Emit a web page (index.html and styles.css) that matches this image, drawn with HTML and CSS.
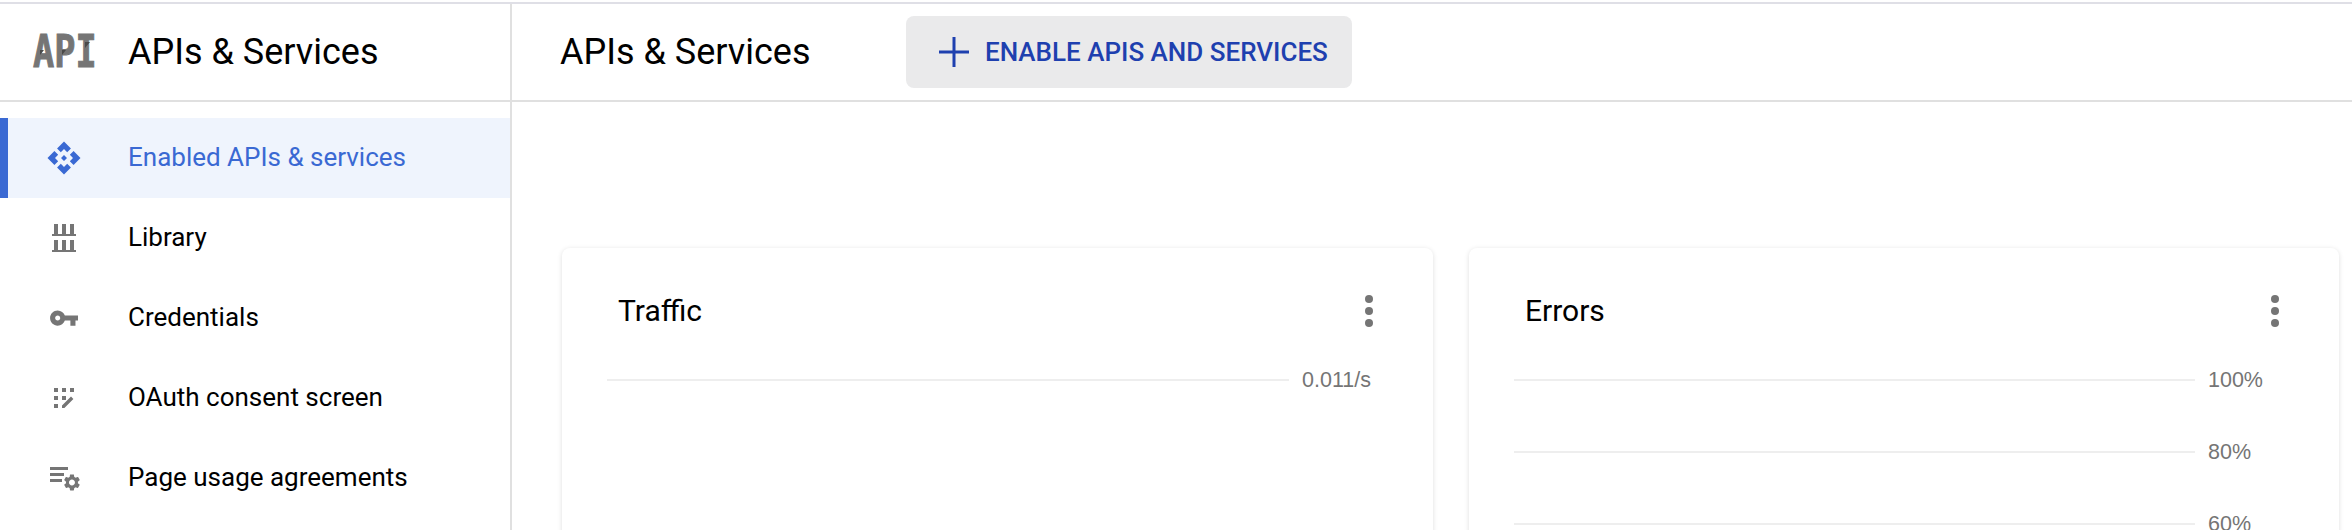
FILE: index.html
```html
<!DOCTYPE html>
<html lang="en">
<head>
    <meta charset="UTF-8">
    <title>APIs &amp; Services</title>
    <link rel="stylesheet" href="styles.css">
</head>
<body>

    <div class="page">
        <aside class="sidebar">
            <div class="sidebar-head">
                <span class="api-logo">
                    <span class="api-logo-text">API</span>
                    <svg class="api-logo-folds" viewBox="0 0 128 44"><path d="M40 20h4l-4 5zM62 20h4l-4 5zM85 12h5l-5 6z"/></svg>
                </span>
                <span class="sidebar-title">APIs &amp; Services</span>
            </div>
            <nav class="nav">
                <a class="nav-item active">
                    <svg class="nav-icon" viewBox="0 0 36 36"><g transform="translate(0 1) scale(1.5)"><path d="M14 12l-2 2-2-2 2-2 2 2zM12 6l2.12 2.12 2.5-2.5L12 1 7.38 5.62l2.5 2.5L12 6zM6 12l2.12-2.12-2.5-2.5L1 12l4.62 4.62 2.5-2.5L6 12zM18 12l-2.12 2.12 2.5 2.5L23 12l-4.62-4.62-2.5 2.5L18 12zM12 18l-2.12-2.12-2.5 2.5L12 23l4.62-4.62-2.5-2.5L12 18z"/></g></svg>
                    <span>Enabled APIs &amp; services</span>
                </a>
                <a class="nav-item">
                    <svg class="nav-icon" viewBox="0 0 36 36"><path d="M8 5h4v10H8zM16 5h4v10h-4zM24 5h4v10h-4zM6 15h24v2H6zM8 21h4v10H8zM16 21h4v10h-4zM24 21h4v10h-4zM6 31h24v2H6z"/></svg>
                    <span>Library</span>
                </a>
                <a class="nav-item">
                    <svg class="nav-icon" viewBox="0 0 36 36"><g transform="translate(2.8 3.8) scale(1.27)"><path d="M12.65 10C11.83 7.67 9.61 6 7 6c-3.31 0-6 2.69-6 6s2.69 6 6 6c2.61 0 4.83-1.67 5.65-4H17v4h4v-4h2v-4H12.65zM7 14c-1.1 0-2-.9-2-2s.9-2 2-2 2 .9 2 2-.9 2-2 2z"/></g></svg>
                    <span>Credentials</span>
                </a>
                <a class="nav-item">
                    <svg class="nav-icon" viewBox="0 0 36 36"><path d="M8 9h4v4H8zM16 9h4v4h-4zM24 9h4v4h-4zM8 17h4v4H8zM16 17h4v4h-4zM8 25h4v4H8zM16 29v-2.4l9-9 2.4 2.4-9 9H16z"/></svg>
                    <span>OAuth consent screen</span>
                </a>
                <a class="nav-item">
                    <svg class="nav-icon" viewBox="0 0 36 36"><path d="M4 8h18v3H4zM4 14h14v3H4zM4 20h12v3H4z"/><g transform="translate(16 13.5) scale(.83)"><path d="M19.14 12.94c.04-.3.06-.61.06-.94 0-.32-.02-.64-.07-.94l2.03-1.58c.18-.14.23-.41.12-.61l-1.92-3.32c-.12-.22-.37-.29-.59-.22l-2.39.96c-.5-.38-1.03-.7-1.62-.94l-.36-2.54c-.04-.24-.24-.41-.48-.41h-3.84c-.24 0-.43.17-.47.41l-.36 2.54c-.59.24-1.13.57-1.62.94l-2.39-.96c-.22-.08-.47 0-.59.22L2.74 8.87c-.12.21-.08.47.12.61l2.03 1.58c-.05.3-.09.63-.09.94s.02.64.07.94l-2.03 1.58c-.18.14-.23.41-.12.61l1.92 3.32c.12.22.37.29.59.22l2.39-.96c.5.38 1.03.7 1.62.94l.36 2.54c.05.24.24.41.48.41h3.84c.24 0 .44-.17.47-.41l.36-2.54c.59-.24 1.13-.56 1.62-.94l2.39.96c.22.08.47 0 .59-.22l1.92-3.32c.12-.22.07-.47-.12-.61l-2.01-1.58zM12 15.6c-1.98 0-3.6-1.62-3.6-3.6s1.62-3.6 3.6-3.6 3.6 1.62 3.6 3.6-1.62 3.6-3.6 3.6z"/></g></svg>
                    <span>Page usage agreements</span>
                </a>
            </nav>
        </aside>

        <main class="main">
            <div class="main-head">
                <h1>APIs &amp; Services</h1>
                <button class="enable-btn">
                    <svg class="plus-icon" viewBox="0 0 30 30"><path d="M13.5 0h3v13.5H30v3H16.5V30h-3V16.5H0v-3h13.5z"/></svg>
                    ENABLE APIS AND SERVICES
                </button>
            </div>

            <div class="cards">
                <section class="card">
                    <div class="card-head">
                        <h2>Traffic</h2>
                        <span class="kebab"><i></i><i></i><i></i></span>
                    </div>
                    <div class="chart-row"><span class="grid-line"></span><span class="tick">0.011/s</span></div>
                    <div class="chart-row"></div>
                    <div class="chart-row"></div>
                </section>
                <section class="card">
                    <div class="card-head">
                        <h2>Errors</h2>
                        <span class="kebab"><i></i><i></i><i></i></span>
                    </div>
                    <div class="chart-row"><span class="grid-line"></span><span class="tick">100%</span></div>
                    <div class="chart-row"><span class="grid-line"></span><span class="tick">80%</span></div>
                    <div class="chart-row"><span class="grid-line"></span><span class="tick">60%</span></div>
                </section>
            </div>
        </main>
    </div>

</body>
</html>
```

FILE: styles.css
```css
html, body {
    margin: 0;
    padding: 0;
    height: 530px;
    overflow: hidden;
    background-color: #fff;
}
body {
    font-family: Roboto, sans-serif;
    color: #000;
}
.page {
    display: flex;
    height: 526px;
    margin-top: 2px;
    border-top: 2px solid #dfdfe6;
}
.sidebar {
    width: 510px;
    flex-shrink: 0;
    border-right: 2px solid #e0e0e0;
}
.sidebar-head {
    display: flex;
    align-items: center;
    height: 96px;
    border-bottom: 2px solid #e0e0e0;
}
.api-logo {
    position: relative;
    display: flex;
    height: 44px;
    width: 128px;
    flex-shrink: 0;
    padding-left: 33px;
    box-sizing: border-box;
}
.api-logo-text {
    font-family: "DejaVu Sans Mono", monospace;
    font-weight: 700;
    font-size: 44px;
    line-height: 44px;
    color: #757575;
    -webkit-text-stroke: 1px #757575;
    transform: scaleX(.8);
    transform-origin: left center;
}
.api-logo-folds {
    position: absolute;
    left: 0;
    top: 0;
    width: 128px;
    height: 44px;
    fill: #4a4a4a;
}
.sidebar-title {
    font-size: 36px;
    line-height: 44px;
}
.nav {
    padding-top: 16px;
}
.nav-item {
    display: flex;
    align-items: center;
    height: 80px;
    box-sizing: border-box;
    border-left: 8px solid transparent;
    padding-left: 38px;
    padding-bottom: 2px;
    font-size: 26px;
}
.nav-item.active {
    background-color: #eff4fd;
    border-left-color: #3a69d3;
    color: #3a69d3;
}
.nav-icon {
    width: 36px;
    height: 36px;
    margin-right: 46px;
    fill: #757575;
    flex-shrink: 0;
}
.active .nav-icon {
    fill: #3a69d3;
}
.main {
    flex: 1;
    min-width: 0;
    overflow: hidden;
}
.main-head {
    display: flex;
    align-items: center;
    height: 96px;
    border-bottom: 2px solid #e0e0e0;
    padding-left: 48px;
}
h1 {
    margin: 0;
    width: 346px;
    font-size: 36px;
    font-weight: 400;
    line-height: 44px;
}
.enable-btn {
    display: flex;
    align-items: center;
    width: 446px;
    height: 72px;
    padding: 0 0 0 33px;
    border: none;
    border-radius: 8px;
    background-color: #eaeaeb;
    color: #1e40af;
    font-family: Roboto, sans-serif;
    font-size: 26px;
    font-weight: 500;
    cursor: pointer;
}
.plus-icon {
    width: 30px;
    height: 30px;
    margin-right: 16px;
    fill: #1e40af;
}
.cards {
    display: grid;
    grid-template-columns: 871px 870px;
    gap: 36px;
    padding: 146px 13px 0 50px;
}
.card {
    height: 400px;
    border-radius: 8px;
    background-color: #fff;
    box-shadow: 0 1px 5px rgba(0, 0, 0, .13);
    padding-left: 45px;
}
.card-head {
    display: flex;
    align-items: center;
    justify-content: space-between;
    height: 32px;
    padding: 47px 60px 17px 11px;
}
h2 {
    margin: 0;
    font-size: 30px;
    font-weight: 400;
    line-height: 32px;
}
.kebab {
    display: flex;
    flex-direction: column;
    gap: 4px;
}
.kebab i {
    width: 8px;
    height: 8px;
    border-radius: 50%;
    background-color: #757575;
}
.chart-row {
    display: flex;
    align-items: center;
    height: 72px;
}
.grid-line {
    flex: 1;
    height: 2px;
    background-color: #eeeeee;
}
.tick {
    width: 144px;
    padding-left: 13px;
    box-sizing: border-box;
    font-family: "Liberation Sans", sans-serif;
    font-size: 21.5px;
    color: #757575;
}
```
